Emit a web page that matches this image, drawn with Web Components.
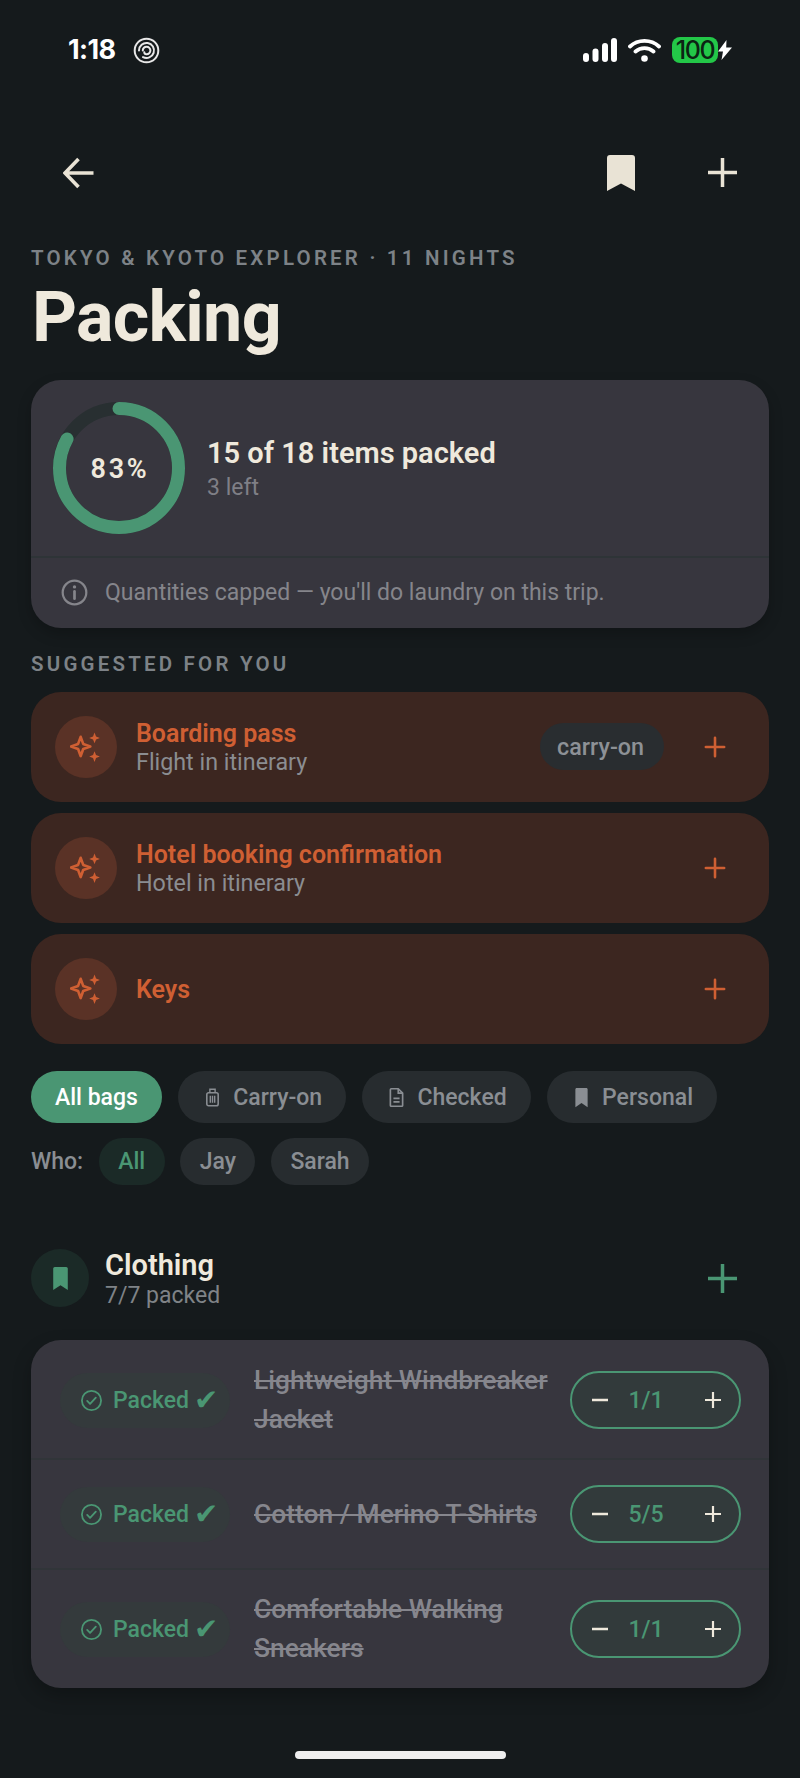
<!DOCTYPE html>
<html lang="en">
<head>
<meta charset="utf-8">
<title>Packing</title>
<style>
  html, body { margin: 0; padding: 0; background: #151a1c; }
  body { width: 800px; height: 1778px; overflow: hidden; font-family: Roboto, "Liberation Sans", sans-serif; color: #efe9dc; }
</style>
</head>
<body>
<packing-page></packing-page>

<script>
const GREEN = "#4a9673";
const ORANGE = "#cf5f33";

const ICONS = {
  plus: `<path d="M12 2v20M2 12h20" fill="none" stroke="currentColor" stroke-width="2.8" stroke-linecap="round"/>`,
  sparkle: `<path d="M12 6.5l2.4 6.6 6.6 2.4-6.6 2.4-2.4 6.6-2.4-6.6-6.6-2.4 6.6-2.4z" fill="none" stroke="currentColor" stroke-width="2.5" stroke-linejoin="round" transform="translate(-2 -1)"/><path d="M23 1.500l1.4 3.6L28 6.500l-3.600 1.400L23 11.500l-1.400-3.600L18 6.500l3.600-1.400z" fill="currentColor"/><path d="M23 19l1.4 3.600L28 24l-3.600 1.400L23 29l-1.400-3.600L18 24l3.600-1.400z" fill="currentColor"/>`,
  bookmark: `<path d="M5 2.5C5 1.7 5.7 1 6.5 1h11c.8 0 1.5.7 1.5 1.5V23l-7-4.6L5 23z" fill="currentColor"/>`,
  luggage: `<rect x="5.5" y="6.5" width="13" height="15" rx="2" fill="none" stroke="currentColor" stroke-width="1.8"/><path d="M9 6.5V2.5h6v4M9.5 10v8M12 10v8M14.5 10v8" fill="none" stroke="currentColor" stroke-width="1.6"/>`,
  doc: `<path d="M6 2h8l5 5v14a1 1 0 0 1-1 1H6a1 1 0 0 1-1-1V3a1 1 0 0 1 1-1z" fill="none" stroke="currentColor" stroke-width="1.9" stroke-linejoin="round"/><path d="M14 2v5h5M8.5 13h7M8.5 17h7" fill="none" stroke="currentColor" stroke-width="1.9"/>`,
  check: `<circle cx="12" cy="12" r="10" fill="none" stroke="currentColor" stroke-width="1.9"/><path d="M7.5 12.5l3 3 6-6.5" fill="none" stroke="currentColor" stroke-width="1.9" stroke-linecap="round" stroke-linejoin="round"/>`,
  info: `<circle cx="12" cy="12" r="10.5" fill="none" stroke="currentColor" stroke-width="2"/><path d="M12 11v6.5" stroke="currentColor" stroke-width="2.4" stroke-linecap="round"/><circle cx="12" cy="7" r="1.5" fill="currentColor"/>`
};

function icon(name, size) {
  const box = name === "sparkle" ? "0 0 30 30" : "0 0 24 24";
  return `<svg width="${size}" height="${size}" viewBox="${box}" aria-hidden="true">${ICONS[name]}</svg>`;
}

class StatusBar extends HTMLElement {
  constructor() {
    super();
    this.attachShadow({ mode: "open" });
    this.shadowRoot.innerHTML = `
      <style>
        :host { display: flex; height: 100px; box-sizing: border-box; padding: 37px 68px 0 68px; align-items: flex-start; color: #fff; }
        .time { font: 700 27px/26px Inter, "Liberation Sans", sans-serif; letter-spacing: -0.6px; width: 50px; }
        .focus { margin: 0 0 0 15px; }
        .right { margin-left: auto; display: flex; align-items: center; height: 26px; }
        .battery { position: relative; width: 46px; height: 26px; margin-left: 11px; background: #23c748; border-radius: 8px; color: #0c2413; font: 500 25px/26px Inter, "Liberation Sans", sans-serif; letter-spacing: -1.4px; text-align: center; }
      </style>
      <span class="time">1:18</span>
      <svg class="focus" width="27" height="27" viewBox="0 0 27 27" aria-hidden="true">
        <circle cx="13.5" cy="13.5" r="11.8" fill="none" stroke="#e8e8e8" stroke-width="2"/>
        <path d="M6 13.5a7.5 7.5 0 1 1 4 6.6M9.8 13.5a3.8 3.8 0 1 1 3.7 3.8c-1.4 0-2.2-.8-2.2-2" fill="none" stroke="#e8e8e8" stroke-width="2" stroke-linecap="round"/>
      </svg>
      <div class="right">
        <svg width="34" height="24" viewBox="0 0 34 24" fill="#fff" aria-hidden="true">
          <rect x="0" y="15" width="6" height="9" rx="3"/><rect x="9.5" y="10.5" width="6" height="13.5" rx="3"/><rect x="19" y="5" width="6" height="19" rx="3"/><rect x="28" y="0" width="6" height="24" rx="3"/>
        </svg>
        <svg style="margin-left:11px" width="33" height="24" viewBox="0 0 33 24" aria-hidden="true">
          <path d="M2 8.5C10 1 23 1 31 8.5M7.5 13.5c5-4.5 13-4.5 18 0" fill="none" stroke="#fff" stroke-width="3.8" stroke-linecap="round"/>
          <circle cx="16.5" cy="20.5" r="3.3" fill="#fff"/>
        </svg>
        <div class="battery">100</div>
        <svg width="14" height="20" viewBox="0 0 14 20" fill="#fff" aria-hidden="true"><path d="M8.5 0L0 11.5h5L3.5 20 14 7.5H8.2z"/></svg>
      </div>
    `;
  }
}

class NavBar extends HTMLElement {
  constructor() {
    super();
    this.attachShadow({ mode: "open" });
    this.shadowRoot.innerHTML = `
      <style>
        :host { display: flex; align-items: center; height: 145px; box-sizing: border-box; padding: 0 63px 0 63px; color: #e9e3d5; }
        .bookmark { margin-left: auto; margin-right: 73px; }
        svg { display: block; }
      </style>
      <svg width="32" height="32" viewBox="0 0 32 32" aria-hidden="true"><path d="M30.5 16H2.500M15.500 2L2 16 15.500 30" fill="none" stroke="currentColor" stroke-width="3.600"/></svg>
      <svg class="bookmark" width="28" height="36" viewBox="0 0 28 36" fill="currentColor" aria-hidden="true"><path d="M0 3a3 3 0 0 1 3-3h22a3 3 0 0 1 3 3v33L14 28.500 0 36z"/></svg>
      <svg width="29" height="29" viewBox="0 0 29 29" aria-hidden="true"><path d="M14.500 0v29M0 14.500h29" stroke="currentColor" stroke-width="3.500" fill="none"/></svg>
    `;
  }
}

class PageTitle extends HTMLElement {
  constructor() {
    super();
    this.attachShadow({ mode: "open" });
    this.shadowRoot.innerHTML = `
      <style>
        :host { display: block; }
        .eyebrow { font-size: 20.500px; line-height: 26px; font-weight: 600; letter-spacing: 3.200px; color: #7d8287; }
        h1 { margin: 3px 0 0 1px; font-size: 70px; line-height: 86px; font-weight: 700; letter-spacing: -0.7px; color: #efe9dc; }
      </style>
      <div class="eyebrow"><slot name="eyebrow"></slot></div>
      <h1><slot></slot></h1>
    `;
  }
}

class ProgressRing extends HTMLElement {
  constructor() {
    super();
    this.attachShadow({ mode: "open" });
    const pct = Number(this.getAttribute("value") || 0);
    const r = 59.5, c = 2 * Math.PI * r;
    this.shadowRoot.innerHTML = `
      <style>
        :host { display: grid; place-items: center; width: 132px; height: 132px; position: relative; flex: none; }
        svg { position: absolute; inset: 0; transform: rotate(-90deg); }
        span { font-size: 27px; font-weight: 600; letter-spacing: 2.800px; color: #efe9dc; margin: 1px 0 0 2px; }
      </style>
      <svg width="132" height="132" viewBox="0 0 132 132" aria-hidden="true">
        <circle cx="66" cy="66" r="${r}" fill="none" stroke="#282f31" stroke-width="13"/>
        <circle cx="66" cy="66" r="${r}" fill="none" stroke="${GREEN}" stroke-width="13" stroke-linecap="round" stroke-dasharray="${c * pct / 100} ${c}"/>
      </svg>
      <span>${pct}%</span>
    `;
  }
}

class SummaryCard extends HTMLElement {
  constructor() {
    super();
    this.attachShadow({ mode: "open" });
    this.shadowRoot.innerHTML = `
      <style>
        :host { display: block; background: #37363e; border-radius: 30px; box-shadow: 0 6px 14px rgba(0,0,0,.22); overflow: hidden; }
        .top { display: flex; align-items: center; gap: 22px; height: 176px; padding-left: 22px; }
        .text { margin-top: 2px; }
        .title { font-size: 29px; line-height: 34px; font-weight: 600; color: #efe9dc; }
        .sub { font-size: 23px; line-height: 30px; color: #7f7f86; margin-top: 3px; }
        .note { display: flex; align-items: center; border-top: 2px solid #2e3437; padding: 0 0 2px 30px; font-size: 23px; color: #85858b; height: 68px; }
        .note svg { margin-right: 17px; color: #85858b; }
      </style>
      <div class="top">
        <progress-ring value="83"></progress-ring>
        <div class="text">
          <div class="title"><slot name="title"></slot></div>
          <div class="sub"><slot name="sub"></slot></div>
        </div>
      </div>
      <div class="note">${icon("info", 27)}<slot name="note"></slot></div>
    `;
  }
}

class SectionLabel extends HTMLElement {
  constructor() {
    super();
    this.attachShadow({ mode: "open" });
    this.shadowRoot.innerHTML = `
      <style>
        :host { display: block; margin: 23px 0 14.500px; font-size: 20.500px; line-height: 26px; font-weight: 600; letter-spacing: 3.200px; color: #7d8287; }
      </style>
      <slot></slot>
    `;
  }
}

class SuggestCard extends HTMLElement {
  constructor() {
    super();
    this.attachShadow({ mode: "open" });
    const sub = this.getAttribute("sub");
    const tag = this.getAttribute("tag");
    this.shadowRoot.innerHTML = `
      <style>
        :host { display: flex; align-items: center; height: 110px; box-sizing: border-box; padding: 0 43px 0 24px; background: #3c2620; border-radius: 30px; }
        .spark { display: grid; place-items: center; width: 62px; height: 62px; flex: none; border-radius: 50%; background: #5a3226; color: ${ORANGE}; }
        .text { flex: 1; margin: 2px 0 0 19px; }
        .name { font-size: 25px; line-height: 28px; font-weight: 600; color: ${ORANGE}; }
        .sub { font-size: 23.300px; line-height: 28px; color: #8b8d91; }
        .tag { display: flex; align-items: center; height: 47px; padding: 0 20px 0 17px; margin-right: 40px; border-radius: 24px; background: #292d30; font-size: 23.300px; font-weight: 500; color: #8d9196; }
        .add { display: block; color: ${ORANGE}; }
      </style>
      <div class="spark">${icon("sparkle", 32)}</div>
      <div class="text">
        <div class="name"><slot></slot></div>
        ${sub ? `<div class="sub">${sub}</div>` : ""}
      </div>
      ${tag ? `<div class="tag">${tag}</div>` : ""}
      <svg class="add" width="22" height="22" viewBox="0 0 24 24" aria-hidden="true">${ICONS.plus}</svg>
    `;
  }
}

class FilterChip extends HTMLElement {
  constructor() {
    super();
    this.attachShadow({ mode: "open" });
    const ic = this.getAttribute("icon");
    this.shadowRoot.innerHTML = `
      <style>
        :host { display: inline-flex; align-items: center; gap: 10.400px; height: var(--chip-h, 52px); padding: 0 var(--chip-pad, 24px); border-radius: 26px; background: #272c2f; color: #8a8e93; font-size: 23px; font-weight: 500; }
        :host([active]) { background: ${GREEN}; color: #fff; }
        :host([soft]) { background: #1b2a27; color: ${GREEN}; }
        svg { display: block; }
      </style>
      ${ic ? icon(ic, 21) : ""}<slot></slot>
    `;
  }
}

class ChipRow extends HTMLElement {
  constructor() {
    super();
    this.attachShadow({ mode: "open" });
    this.shadowRoot.innerHTML = `
      <style>
        :host { display: flex; align-items: center; gap: var(--row-gap, 16px); }
      </style>
      <slot></slot>
    `;
  }
}

class CategoryHead extends HTMLElement {
  constructor() {
    super();
    this.attachShadow({ mode: "open" });
    this.shadowRoot.innerHTML = `
      <style>
        :host { display: flex; align-items: center; height: 58px; padding-right: 32px; color: ${GREEN}; }
        .badge { display: grid; place-items: center; width: 58px; height: 58px; border-radius: 50%; background: #1b2a27; flex: none; }
        .text { flex: 1; margin: 3px 0 0 16px; }
        .title { font-size: 29px; line-height: 33px; font-weight: 600; color: #efe9dc; }
        .sub { font-size: 23px; line-height: 28px; color: #7f8387; }
        .badge svg { display: block; }
      </style>
      <div class="badge">${icon("bookmark", 25)}</div>
      <div class="text">
        <div class="title"><slot></slot></div>
        <div class="sub"><slot name="sub"></slot></div>
      </div>
      <svg width="29" height="29" viewBox="0 0 29 29" aria-hidden="true"><path d="M14.500 0v29M0 14.500h29" stroke="currentColor" stroke-width="3.500" fill="none"/></svg>
    `;
  }
}

class QtyStepper extends HTMLElement {
  constructor() {
    super();
    this.attachShadow({ mode: "open" });
    this.shadowRoot.innerHTML = `
      <style>
        :host { display: flex; align-items: center; flex: none; width: 171px; height: 58px; box-sizing: border-box; padding: 0 18px 0 20px; border: 2.500px solid ${GREEN}; border-radius: 29px; background: #323a3b; }
        .value { flex: 1; text-align: center; margin-right: 21px; font-size: 23px; font-weight: 500; color: ${GREEN}; }
        svg { display: block; color: #efe9dc; }
      </style>
      <svg width="16" height="16" viewBox="0 0 16 16" aria-hidden="true"><path d="M0 8h16" stroke="currentColor" stroke-width="2.400"/></svg>
      <span class="value"><slot></slot></span>
      <svg width="16" height="16" viewBox="0 0 16 16" aria-hidden="true"><path d="M8 0v16M0 8h16" stroke="currentColor" stroke-width="2.200"/></svg>
    `;
  }
}

class PackRow extends HTMLElement {
  constructor() {
    super();
    this.attachShadow({ mode: "open" });
    const qty = this.getAttribute("qty");
    this.shadowRoot.innerHTML = `
      <style>
        :host { display: flex; align-items: center; min-height: 110px; box-sizing: border-box; padding: 20px 28px 20px 29px; border-top: 2px solid #313539; }
        :host(:first-child) { border-top: 0; padding: 21px 28px 19px 29px; }
        .pill { display: flex; align-items: center; flex: none; width: 170px; height: 55px; box-sizing: border-box; padding-left: 20px; border-radius: 28px; background: #343a3c; color: ${GREEN}; font-size: 23px; font-weight: 500; white-space: nowrap; }
        .pill svg { margin-right: 10px; flex: none; }
        .tick { font-family: "DejaVu Sans", sans-serif; margin-left: 5px; font-size: 29px; line-height: 1; }
        .name { flex: 1; margin: 0 14px 0 24px; font-size: 26.400px; line-height: 39px; font-weight: 500; color: #86868d; text-decoration: line-through; }
      </style>
      <div class="pill">${icon("check", 23)}Packed<span class="tick">✔</span></div>
      <div class="name"><slot></slot></div>
      <qty-stepper>${qty}</qty-stepper>
    `;
  }
}

class PackList extends HTMLElement {
  constructor() {
    super();
    this.attachShadow({ mode: "open" });
    this.shadowRoot.innerHTML = `
      <style>
        :host { display: block; background: #37363e; border-radius: 30px; box-shadow: 0 8px 18px rgba(0,0,0,.25); overflow: hidden; }
      </style>
      <slot></slot>
    `;
  }
}

class HomeBar extends HTMLElement {
  constructor() {
    super();
    this.attachShadow({ mode: "open" });
    this.shadowRoot.innerHTML = `
      <style>
        :host { display: block; width: 211px; height: 8px; margin: 63px auto 0; background: #eeeeee; border-radius: 4px; }
      </style>
    `;
  }
}

class PackingPage extends HTMLElement {
  constructor() {
    super();
    this.attachShadow({ mode: "open" });
    this.shadowRoot.innerHTML = `
      <style>
        :host { display: block; width: 800px; }
        main { padding: 0 31px; }
        .suggest { display: grid; gap: 11.300px; }
        .bags { margin-top: 27px; }
        .who { margin-top: 15px; --chip-h: 47px; --chip-pad: 19.500px; --row-gap: 15.500px; }
        .who span { font-size: 23px; font-weight: 500; color: #8a8e93; }
        category-head { margin-top: 64px; }
        pack-list { margin-top: 33px; }
      </style>
      <status-bar></status-bar>
      <nav-bar></nav-bar>
      <main>
        <page-title><span slot="eyebrow">TOKYO &amp; KYOTO EXPLORER · 11 NIGHTS</span>Packing</page-title>
        <summary-card style="margin-top:20px">
          <span slot="title">15 of 18 items packed</span>
          <span slot="sub">3 left</span>
          <span slot="note">Quantities capped — you'll do laundry on this trip.</span>
        </summary-card>
        <section-label>SUGGESTED FOR YOU</section-label>
        <div class="suggest">
          <suggest-card sub="Flight in itinerary" tag="carry-on">Boarding pass</suggest-card>
          <suggest-card sub="Hotel in itinerary">Hotel booking confirmation</suggest-card>
          <suggest-card>Keys</suggest-card>
        </div>
        <chip-row class="bags">
          <filter-chip active>All bags</filter-chip>
          <filter-chip icon="luggage">Carry-on</filter-chip>
          <filter-chip icon="doc">Checked</filter-chip>
          <filter-chip icon="bookmark">Personal</filter-chip>
        </chip-row>
        <chip-row class="who">
          <span>Who:</span>
          <filter-chip soft>All</filter-chip>
          <filter-chip>Jay</filter-chip>
          <filter-chip>Sarah</filter-chip>
        </chip-row>
        <category-head>Clothing<span slot="sub">7/7 packed</span></category-head>
        <pack-list>
          <pack-row qty="1/1">Lightweight Windbreaker Jacket</pack-row>
          <pack-row qty="5/5">Cotton / Merino T-Shirts</pack-row>
          <pack-row qty="1/1">Comfortable Walking Sneakers</pack-row>
        </pack-list>
      </main>
      <home-bar></home-bar>
    `;
  }
}

customElements.define("status-bar", StatusBar);
customElements.define("nav-bar", NavBar);
customElements.define("page-title", PageTitle);
customElements.define("progress-ring", ProgressRing);
customElements.define("summary-card", SummaryCard);
customElements.define("section-label", SectionLabel);
customElements.define("suggest-card", SuggestCard);
customElements.define("filter-chip", FilterChip);
customElements.define("chip-row", ChipRow);
customElements.define("category-head", CategoryHead);
customElements.define("qty-stepper", QtyStepper);
customElements.define("pack-row", PackRow);
customElements.define("pack-list", PackList);
customElements.define("home-bar", HomeBar);
customElements.define("packing-page", PackingPage);
</script>
</body>
</html>
